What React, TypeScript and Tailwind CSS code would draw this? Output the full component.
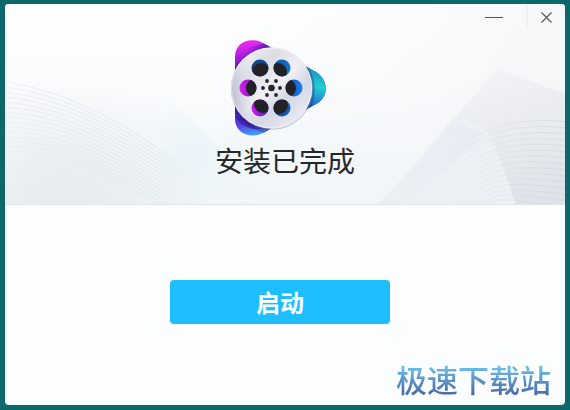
import type { ReactNode } from 'react';

const fontStack = "font-['Noto_Sans_CJK_SC',sans-serif]";

const holes = [
  { x: 260, y: 68, fill: 'url(#holeTopLeft)' },
  { x: 282, y: 68, fill: 'url(#holeTopRight)' },
  { x: 248, y: 88, fill: 'url(#holeLeft)' },
  { x: 294, y: 88, fill: 'url(#holeRight)' },
  { x: 260, y: 108, fill: 'url(#holeBottomLeft)' },
  { x: 282, y: 108, fill: 'url(#holeBottomRight)' },
];

// dark inner disc of every hole, shifted towards the hub
const shades = [
  { x: 261, y: 72 },
  { x: 278, y: 72 },
  { x: 255, y: 88 },
  { x: 287, y: 88 },
  { x: 263, y: 104 },
  { x: 279, y: 105 },
];

const hubDots = [
  [267, 81],
  [276, 81],
  [263, 88],
  [280, 88],
  [267, 95],
  [276, 95],
];

function ReelLogo() {
  return (
    <svg viewBox="228 36 104 104" className="size-[104px]" aria-hidden="true">
      <defs>
        <linearGradient id="lobes" x1="235" y1="40" x2="246" y2="136" gradientUnits="userSpaceOnUse">
          <stop offset="0" stopColor="#f02ee4" />
          <stop offset="0.12" stopColor="#c822ea" />
          <stop offset="0.3" stopColor="#6a18c0" />
          <stop offset="0.7" stopColor="#4a1cb0" />
          <stop offset="0.88" stopColor="#5a3ee0" />
          <stop offset="1" stopColor="#3fa4f4" />
        </linearGradient>
        <linearGradient id="rightLobe" x1="314" y1="64" x2="306" y2="112" gradientUnits="userSpaceOnUse">
          <stop offset="0" stopColor="#1583c4" />
          <stop offset="0.45" stopColor="#26cdd2" />
          <stop offset="0.75" stopColor="#1b86d6" />
          <stop offset="1" stopColor="#2340b8" />
        </linearGradient>
        <linearGradient id="topEdge" x1="238" y1="44" x2="268" y2="56" gradientUnits="userSpaceOnUse">
          <stop offset="0.2" stopColor="#8a1ad8" stopOpacity="0" />
          <stop offset="1" stopColor="#2c1c9c" />
        </linearGradient>
        <linearGradient id="metal" x1="240" y1="52" x2="302" y2="126" gradientUnits="userSpaceOnUse">
          <stop offset="0" stopColor="#f0f0f5" />
          <stop offset="0.25" stopColor="#dcdde4" />
          <stop offset="0.5" stopColor="#f0f0f4" />
          <stop offset="0.68" stopColor="#d3d6e4" />
          <stop offset="1" stopColor="#eef0f6" />
        </linearGradient>
        <linearGradient id="sheen" x1="231" y1="96" x2="312" y2="80" gradientUnits="userSpaceOnUse">
          <stop offset="0" stopColor="#a9adc8" stopOpacity="0.7" />
          <stop offset="0.4" stopColor="#ffffff" stopOpacity="0" />
          <stop offset="0.75" stopColor="#ffffff" stopOpacity="0" />
          <stop offset="1" stopColor="#c9cddd" stopOpacity="0.5" />
        </linearGradient>
        <linearGradient id="holeTopLeft">
          <stop offset="0" stopColor="#1c3f86" />
          <stop offset="1" stopColor="#0b4f94" />
        </linearGradient>
        <linearGradient id="holeTopRight">
          <stop offset="0" stopColor="#0d4f9c" />
          <stop offset="1" stopColor="#1478cc" />
        </linearGradient>
        <linearGradient id="holeLeft">
          <stop offset="0" stopColor="#d622ea" />
          <stop offset="1" stopColor="#6a14b8" />
        </linearGradient>
        <linearGradient id="holeRight">
          <stop offset="0" stopColor="#1240a0" />
          <stop offset="1" stopColor="#1c80f2" />
        </linearGradient>
        <linearGradient id="holeBottomLeft">
          <stop offset="0" stopColor="#d21cf0" />
          <stop offset="1" stopColor="#5a18c8" />
        </linearGradient>
        <linearGradient id="holeBottomRight">
          <stop offset="0" stopColor="#1c3a94" />
          <stop offset="1" stopColor="#1260b8" />
        </linearGradient>
        <clipPath id="holeClip">
          {holes.map((h) => (
            <circle key={`${h.x}-${h.y}`} cx={h.x} cy={h.y} r="8.5" />
          ))}
        </clipPath>
        <clipPath id="bodyClip">
          <path d="M235 57C235 43 249 36 263 43L316 72C329 80 329 97 316 104L263 133C249 140 235 132 235 119Z" />
        </clipPath>
      </defs>
      <g clipPath="url(#bodyClip)">
        <rect x="228" y="36" width="104" height="104" fill="url(#lobes)" />
        <path d="M290 36H332V140H290Z" fill="url(#rightLobe)" />
        <path d="M235 62C240 52 248 47 258 45L275 40L290 60Z" fill="url(#topEdge)" />
        <path d="M235 116C242 128 252 131 270 128L256 138H272V120Z" fill="#35159a" opacity="0.6" />
        <circle cx="272" cy="90" r="43" fill="#1c1470" opacity="0.3" />
      </g>
      <circle cx="272" cy="89" r="41" fill="#8d90a8" opacity="0.4" />
      <circle cx="271.500" cy="88" r="40.700" fill="url(#metal)" />
      <circle cx="271.500" cy="88" r="40.700" fill="url(#sheen)" />
      <circle cx="271.500" cy="88" r="40" fill="none" stroke="#f8f8fc" strokeOpacity="0.6" />
      {holes.map((h) => (
        <circle key={`${h.x}-${h.y}`} cx={h.x} cy={h.y} r="8.5" fill={h.fill} />
      ))}
      <g clipPath="url(#holeClip)" fill="#222226">
        {shades.map((s) => (
          <circle key={`${s.x}-${s.y}`} cx={s.x} cy={s.y} r="9" />
        ))}
      </g>
      <g fill="#25252b">
        <circle cx="271.500" cy="88" r="3.300" />
        {hubDots.map(([x, y]) => (
          <circle key={`${x}-${y}`} cx={x} cy={y} r="1.900" />
        ))}
      </g>
    </svg>
  );
}

// Soft waves behind the title
function Backdrop() {
  const lines = Array.from({ length: 15 }, (_, i) => i);
  return (
    <svg
      viewBox="0 0 560 200"
      preserveAspectRatio="none"
      className="absolute inset-0 size-full"
      aria-hidden="true"
    >
      <defs>
        <linearGradient id="sky" x1="0" y1="0" x2="0" y2="1">
          <stop offset="0" stopColor="#fefeff" />
          <stop offset="0.4" stopColor="#fafcfd" />
          <stop offset="1" stopColor="#eff4f7" />
        </linearGradient>
        <radialGradient id="glow" cx="185" cy="150" r="70" gradientUnits="userSpaceOnUse">
          <stop offset="0" stopColor="#e8f3f8" />
          <stop offset="1" stopColor="#f0f7fa" stopOpacity="0" />
        </radialGradient>
        <radialGradient id="hill" cx="60" cy="220" r="150" gradientUnits="userSpaceOnUse">
          <stop offset="0" stopColor="#e5eaf0" />
          <stop offset="0.4" stopColor="#e9eef2" />
          <stop offset="1" stopColor="#f2f5f8" stopOpacity="0" />
        </radialGradient>
        <linearGradient id="mist" x1="260" y1="0" x2="560" y2="100" gradientUnits="userSpaceOnUse">
          <stop offset="0" stopColor="#f6f9fb" stopOpacity="0" />
          <stop offset="1" stopColor="#f4f6f8" />
        </linearGradient>
        <linearGradient id="slope" x1="480" y1="60" x2="530" y2="200" gradientUnits="userSpaceOnUse">
          <stop offset="0" stopColor="#f3f5f7" />
          <stop offset="0.5" stopColor="#e8ebef" />
          <stop offset="1" stopColor="#dfe3e9" />
        </linearGradient>
        <linearGradient id="band" x1="0" y1="1" x2="1" y2="0">
          <stop offset="0" stopColor="#ebf0f5" />
          <stop offset="1" stopColor="#e8ecf3" />
        </linearGradient>
        <linearGradient id="leftLines" x1="0" y1="0" x2="215" y2="0" gradientUnits="userSpaceOnUse">
          <stop offset="0" stopColor="#e9edf1" />
          <stop offset="0.7" stopColor="#dce4e9" />
          <stop offset="1" stopColor="#e2e9ed" stopOpacity="0" />
        </linearGradient>
        <linearGradient id="rightLines" x1="430" y1="0" x2="560" y2="0" gradientUnits="userSpaceOnUse">
          <stop offset="0" stopColor="#cfd5de" stopOpacity="0" />
          <stop offset="1" stopColor="#cbd1d9" />
        </linearGradient>
      </defs>
      <rect width="560" height="200" fill="url(#sky)" />
      <path d="M100 20C140 60 165 110 250 170V200H60Z" fill="url(#glow)" />
      <path d="M0 60H220V200H0Z" fill="url(#hill)" />
      <path d="M250 0H560V200H250Z" fill="url(#mist)" />
      <path d="M375 200L492 65L560 90V200Z" fill="url(#slope)" />
      <path d="M375 200L450 112C475 120 485 128 490 143L511 200Z" fill="#ecf1f6" />
      <path d="M370 200C400 180 430 140 449 117L480 130C460 150 430 175 398 200Z" fill="url(#band)" />
      <g fill="none" stroke="url(#leftLines)">
        {lines.map((i) => (
          <path
            key={i}
            d={`M0 ${78 + i * 5}C70 ${88 + i * 4} 130 ${124 + i * 4} 215 ${190 + i * 4}`}
            opacity="0.8"
          />
        ))}
      </g>
      <g fill="none" stroke="url(#rightLines)" opacity="0.5">
        {lines.map((i) => (
          <path key={i} d={`M${400 + i * 6} 200C${440 + i * 4} ${138 + i * 4} 490 ${110 + i * 6} 560 ${118 + i * 6}`} />
        ))}
      </g>
    </svg>
  );
}

function WindowButton({ label, children }: { label: string; children: ReactNode }) {
  return (
    <button type="button" aria-label={label} className="flex h-7 items-center justify-center text-[#55585b]">
      {children}
    </button>
  );
}

export default function App() {
  return (
    <div className={`flex min-h-screen bg-[#0d686b] px-[5px] pt-1 pb-[5px] ${fontStack}`}>
      <div className="flex flex-1 flex-col overflow-hidden rounded-sm bg-[#fbfdfe]">
        <header className="relative border-b border-[#dfe4e8] pb-6">
          <Backdrop />
          <div className="relative flex h-8 items-start justify-end">
            <WindowButton label="最小化">
              <svg viewBox="0 0 62 28" className="h-7 w-[62px]" stroke="currentColor">
                <path d="M20 13.500H38" />
              </svg>
            </WindowButton>
            <div className="h-6 w-px bg-[#eceff1]" />
            <WindowButton label="关闭">
              <svg viewBox="0 0 37 28" className="h-7 w-[37px]" stroke="currentColor" strokeWidth="1.2">
                <path d="M13.500 8.500L23.500 18.500M23.500 8.500L13.500 18.500" />
              </svg>
            </WindowButton>
          </div>
          <div className="relative flex flex-col items-center">
            <div className="pr-[10px]">
              <ReelLogo />
            </div>
            <h1 className="text-[28px] leading-10 text-[#25282b]">安装已完成</h1>
          </div>
        </header>
        <main className="flex flex-1 flex-col justify-between pt-[75px]">
          <div className="flex justify-center pr-[10px]">
            <button
              type="button"
              className="h-11 w-[220px] rounded bg-[#1fbfff] text-2xl leading-8 font-bold text-white"
            >
              启动
            </button>
          </div>
          <p className="self-end bg-linear-to-b from-[#6cc4ec] from-20% to-[#4a68a4] to-80% bg-clip-text pr-[14px] pb-[2px] text-[31px] leading-12 font-medium text-transparent">
            极速下载站
          </p>
        </main>
      </div>
    </div>
  );
}
